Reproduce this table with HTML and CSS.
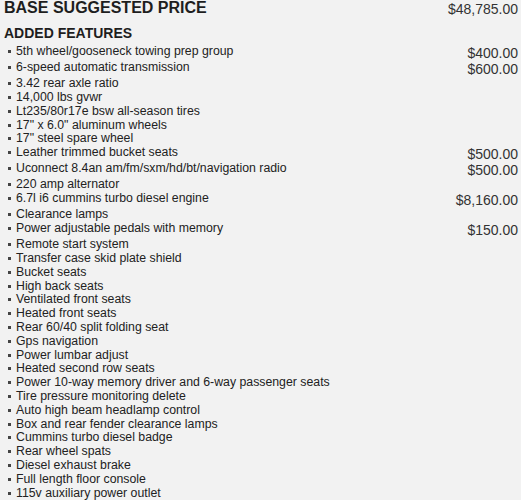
FILE: index.html
```html
<!DOCTYPE html>
<html>
<head>
<meta charset="utf-8">
<link rel="stylesheet" href="styles.css">
</head>
<body>
<div class="sheet">
  <div class="base">
    <h1 class="base-title">BASE SUGGESTED PRICE</h1>
    <span class="price">$48,785.00</span>
  </div>
  <h2 class="section-title">ADDED FEATURES</h2>
  <ul class="features">
    <li><span class="name">5th wheel/gooseneck towing prep group</span><span class="price">$400.00</span></li>
    <li><span class="name">6-speed automatic transmission</span><span class="price">$600.00</span></li>
    <li><span class="name">3.42 rear axle ratio</span></li>
    <li><span class="name">14,000 lbs gvwr</span></li>
    <li><span class="name">Lt235/80r17e bsw all-season tires</span></li>
    <li><span class="name">17" x 6.0" aluminum wheels</span></li>
    <li><span class="name">17" steel spare wheel</span></li>
    <li><span class="name">Leather trimmed bucket seats</span><span class="price">$500.00</span></li>
    <li><span class="name">Uconnect 8.4an am/fm/sxm/hd/bt/navigation radio</span><span class="price">$500.00</span></li>
    <li><span class="name">220 amp alternator</span></li>
    <li><span class="name">6.7l i6 cummins turbo diesel engine</span><span class="price">$8,160.00</span></li>
    <li><span class="name">Clearance lamps</span></li>
    <li><span class="name">Power adjustable pedals with memory</span><span class="price">$150.00</span></li>
    <li><span class="name">Remote start system</span></li>
    <li><span class="name">Transfer case skid plate shield</span></li>
    <li><span class="name">Bucket seats</span></li>
    <li><span class="name">High back seats</span></li>
    <li><span class="name">Ventilated front seats</span></li>
    <li><span class="name">Heated front seats</span></li>
    <li><span class="name">Rear 60/40 split folding seat</span></li>
    <li><span class="name">Gps navigation</span></li>
    <li><span class="name">Power lumbar adjust</span></li>
    <li><span class="name">Heated second row seats</span></li>
    <li><span class="name">Power 10-way memory driver and 6-way passenger seats</span></li>
    <li><span class="name">Tire pressure monitoring delete</span></li>
    <li><span class="name">Auto high beam headlamp control</span></li>
    <li><span class="name">Box and rear fender clearance lamps</span></li>
    <li><span class="name">Cummins turbo diesel badge</span></li>
    <li><span class="name">Rear wheel spats</span></li>
    <li><span class="name">Diesel exhaust brake</span></li>
    <li><span class="name">Full length floor console</span></li>
    <li><span class="name">115v auxiliary power outlet</span></li>
  </ul>
</div>
</body>
</html>
```

FILE: styles.css
```css
html, body {
  margin: 0;
  padding: 0;
  background: #f2f2f2;
}

.sheet {
  padding: 0 3px 0 4px;
  font-family: "Liberation Sans", Arial, sans-serif;
  color: #222;
}

.base {
  display: flex;
  justify-content: space-between;
  align-items: flex-start;
}

.base-title {
  margin: 0;
  font-size: 16px;
  font-weight: bold;
  line-height: 16px;
  color: #1e1e1e;
}

.price {
  font-size: 14px;
  line-height: 16.1px;
  color: #333;
  white-space: nowrap;
}

.base .price {
  margin-top: 1px;
}

.section-title {
  margin: 8px 0 4px;
  font-size: 14px;
  font-weight: bold;
  line-height: 16px;
  color: #1e1e1e;
}

.features {
  list-style: none;
  margin: 0;
  padding: 0;
}

.features li {
  display: flex;
  justify-content: space-between;
  align-items: flex-start;
  font-size: 12.3px;
  line-height: 13.8px;
}

.name {
  display: flex;
  align-items: flex-start;
}

.name::before {
  content: "";
  width: 3px;
  height: 3px;
  background: #444;
  margin: 5px 5px 0 4px;
  flex: none;
}
```
